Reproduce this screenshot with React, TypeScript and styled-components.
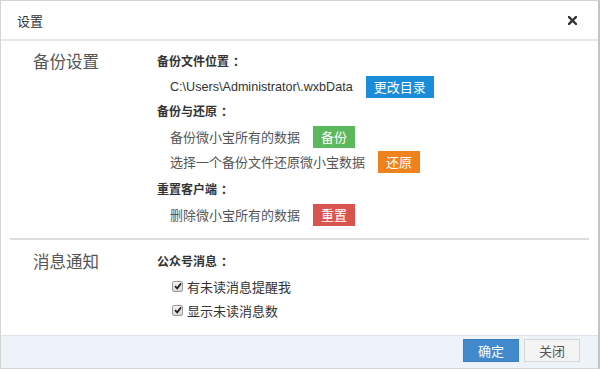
import React from 'react'
import styled, { createGlobalStyle } from 'styled-components'

const GlobalStyle = createGlobalStyle`
  html, body {
    margin: 0;
    padding: 0;
    background: #fff;
  }
  body {
    font-family: "Open Sans", "Noto Sans CJK SC", sans-serif;
    color: #333;
  }
`

const colors: Record<string, string> = {
  blue: '#1a8cd8',
  green: '#5cb85c',
  orange: '#f0821e',
  red: '#d9534f',
}

function App() {
  return (
    <>
      <GlobalStyle />
      <Dialog>
        <Header>
          <Title>设置</Title>
          <CloseBtn aria-label="close">
            <svg width="9" height="9" viewBox="0 0 9 9">
              <path d="M1 1 L8 8 M8 1 L1 8" stroke="#333" strokeWidth="2.4" strokeLinecap="square" />
            </svg>
          </CloseBtn>
        </Header>

        <Body>
          <Section>
            <SectionLabel>备份设置</SectionLabel>
            <div>
              <GroupTitle>备份文件位置<Colon>：</Colon></GroupTitle>
              <Row>
                <PathText>C:\Users\Administrator\.wxbData</PathText>
                <ActionBtn tone="blue" wide>更改目录</ActionBtn>
              </Row>
              <GroupTitle>备份与还原<Colon>：</Colon></GroupTitle>
              <Row>
                <Hint>备份微小宝所有的数据</Hint>
                <ActionBtn tone="green">备份</ActionBtn>
              </Row>
              <Row>
                <Hint>选择一个备份文件还原微小宝数据</Hint>
                <ActionBtn tone="orange">还原</ActionBtn>
              </Row>
              <GroupTitle spaced>重置客户端<Colon>：</Colon></GroupTitle>
              <Row>
                <Hint>删除微小宝所有的数据</Hint>
                <ActionBtn tone="red">重置</ActionBtn>
              </Row>
            </div>
          </Section>

          <Divider />

          <Section>
            <SectionLabel>消息通知</SectionLabel>
            <div>
              <GroupTitle>公众号消息<Colon>：</Colon></GroupTitle>
              <CheckRow>
                <CheckBox />
                有未读消息提醒我
              </CheckRow>
              <CheckRow>
                <CheckBox />
                显示未读消息数
              </CheckRow>
            </div>
          </Section>
        </Body>

        <Footer>
          <FooterBtn primary>确定</FooterBtn>
          <FooterBtn>关闭</FooterBtn>
        </Footer>
      </Dialog>
    </>
  )
}

const CheckBox = () => (
  <Box>
    <svg width="8" height="8" viewBox="0 0 8 8">
      <path d="M1 4.2 L3.2 6.4 L7 1.4" stroke="#222" strokeWidth="1.8" fill="none" />
    </svg>
  </Box>
)

const Dialog = styled.div`
  width: 600px;
  height: 369px;
  box-sizing: border-box;
  border: 1px solid #d4d4d4;
  border-right: 2px solid #c4c4c4;
  display: flex;
  flex-direction: column;
  background: #fff;
`

const Header = styled.div`
  height: 38px;
  flex: none;
  display: flex;
  align-items: center;
  justify-content: space-between;
  padding: 0 17px 0 16px;
  border-bottom: 2px solid #e8e8e8;
`

const Title = styled.div`
  font-size: 13px;
  color: #333;
`

const CloseBtn = styled.span`
  display: flex;
  width: 9px;
  height: 9px;
  margin-right: 4px;
`

const Body = styled.div`
  flex: 1;
  padding-top: 8px;
`

const Section = styled.div`
  display: grid;
  grid-template-columns: 156px 1fr;
`

const SectionLabel = styled.div`
  padding-left: 32px;
  font-size: 16.5px;
  line-height: 25px;
  color: #555;
`

const GroupTitle = styled.div<{ spaced?: boolean }>`
  font-size: 12px;
  font-weight: bold;
  color: #333;
  line-height: 25px;
  margin-top: ${p => (p.spaced ? '3px' : '0')};
`

const Colon = styled.span`
  padding-left: 4px;
`

const Row = styled.div`
  display: flex;
  align-items: center;
  gap: 13px;
  height: 25px;
  padding-left: 13px;
`

const PathText = styled.span`
  font-family: "Liberation Sans", "Noto Sans CJK SC", sans-serif;
  font-size: 12.6px;
  color: #333;
`

const Hint = styled.span`
  font-size: 13px;
  color: #555;
`

const ActionBtn = styled.span<{ tone: string; wide?: boolean }>`
  display: inline-flex;
  align-items: center;
  justify-content: center;
  width: ${p => (p.wide ? '68px' : '42px')};
  height: 22px;
  background: ${p => colors[p.tone]};
  color: #fff;
  font-size: 13px;
`

const Divider = styled.div`
  height: 2px;
  background: #dcdcdc;
  margin: 11px 9px 9px;
`

const CheckRow = styled.div`
  display: flex;
  align-items: center;
  gap: 4px;
  height: 24px;
  padding-left: 15px;
  font-size: 13px;
  color: #333;
`

const Box = styled.span`
  display: inline-flex;
  align-items: center;
  justify-content: center;
  width: 9px;
  height: 9px;
  border: 1px solid #9a9a9a;
  border-radius: 2px;
  background: linear-gradient(#f4f4f4, #d8d8d8);
`

const Footer = styled.div`
  flex: none;
  height: 33px;
  box-sizing: border-box;
  border-top: 1px solid #dde3ea;
  background: #edf3f9;
  display: flex;
  justify-content: flex-end;
  align-items: flex-start;
  gap: 5px;
  padding: 3px 18px 0 0;
`

const FooterBtn = styled.span<{ primary?: boolean }>`
  display: inline-flex;
  align-items: center;
  justify-content: center;
  width: 56px;
  height: 23px;
  box-sizing: border-box;
  font-size: 13px;
  border: 1px solid ${p => (p.primary ? '#3a80c4' : '#d6d6d6')};
  background: ${p => (p.primary ? '#4289cc' : '#f4f4f4')};
  color: ${p => (p.primary ? '#fff' : '#555')};
`

export default App
